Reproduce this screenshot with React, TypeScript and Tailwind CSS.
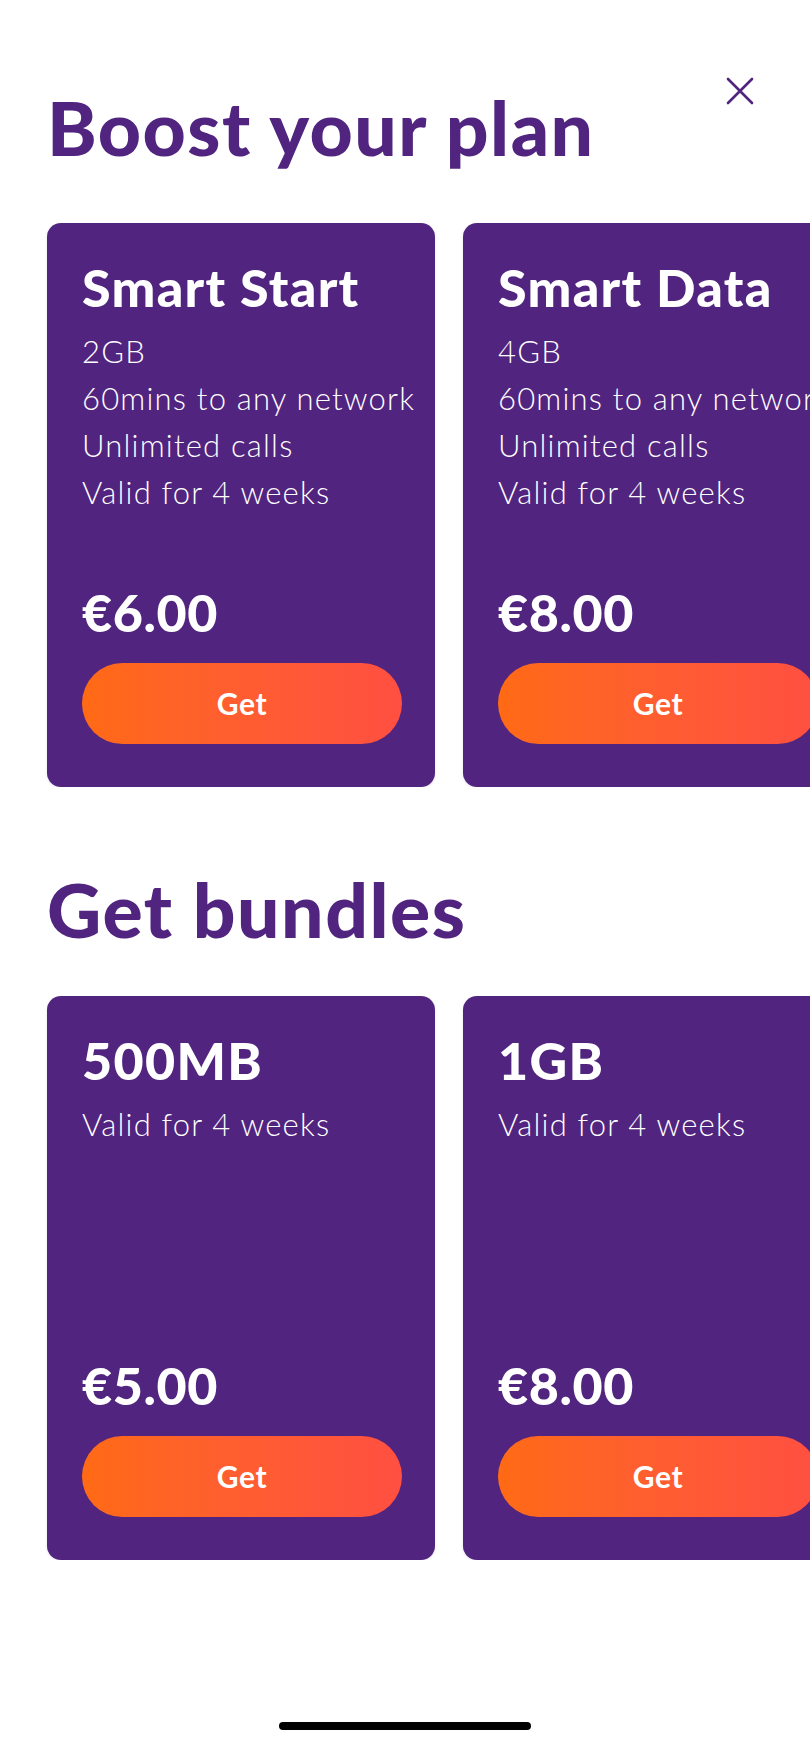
import React from 'react';

type Offer = {
    id: string;
    name: string;
    lines: string[];
    price: string;
};

const plans: Offer[] = [
    { id: 'smart-start', name: 'Smart Start', lines: ['2GB', '60mins to any network', 'Unlimited calls', 'Valid for 4 weeks'], price: '€6.00' },
    { id: 'smart-data', name: 'Smart Data', lines: ['4GB', '60mins to any network', 'Unlimited calls', 'Valid for 4 weeks'], price: '€8.00' },
];

const bundles: Offer[] = [
    { id: '500mb', name: '500MB', lines: ['Valid for 4 weeks'], price: '€5.00' },
    { id: '1gb', name: '1GB', lines: ['Valid for 4 weeks'], price: '€8.00' },
];

const heading = "font-['Lato',sans-serif] font-black";

const OfferCard: React.FC<{ offer: Offer }> = ({ offer }) => (
    <div className="w-[388px] h-[564px] shrink-0 bg-[#51247f] rounded-[14px] shadow-[0_1px_3px_rgba(81,36,127,0.12)] flex flex-col pt-[34px] pb-[43px] px-[35px] text-white">
        <h3 className={`${heading} text-[52px] leading-[60px] tracking-[1.3px] whitespace-nowrap`}>{offer.name}</h3>
        <div className="mt-[11px] font-['Lato',sans-serif] font-light text-[31px] leading-[47px] tracking-[1.2px] whitespace-nowrap">
            {offer.lines.map(line => (
                <p key={line}>{line}</p>
            ))}
        </div>
        <p className={`${heading} mt-auto text-[52px] leading-[60px] tracking-[0.6px]`}>{offer.price}</p>
        <button className="mt-[21px] h-[81px] w-[320px] rounded-full bg-gradient-to-r from-[#ff6a14] to-[#ff4f41] font-['Lato',sans-serif] font-bold text-[30px] tracking-[0.6px] text-white">
            Get
        </button>
    </div>
);

const Section: React.FC<{ title: string; offers: Offer[]; className: string; gap: string }> = ({ title, offers, className, gap }) => (
    <section className={className}>
        <h2 className={`${heading} px-[47px] text-[75px] leading-[88px] tracking-[1.5px] text-[#51247f]`}>{title}</h2>
        <div className={`${gap} flex gap-[28px] px-[47px] overflow-hidden`}>
            {offers.map(offer => (
                <OfferCard key={offer.id} offer={offer} />
            ))}
        </div>
    </section>
);

const App: React.FC = () => {
    return (
        <div className="relative w-[810px] min-h-[1755px] bg-white overflow-hidden flex flex-col">
            <button aria-label="Close" className="absolute top-[77px] right-[56px] w-[28px] h-[28px] text-[#51247f]">
                <svg viewBox="0 0 28 28" className="w-full h-full" fill="none" stroke="currentColor" strokeWidth="2.6" strokeLinecap="round">
                    <path d="M2 2 L26 26 M26 2 L2 26" />
                </svg>
            </button>

            <Section title="Boost your plan" offers={plans} className="pt-[83px]" gap="mt-[52px]" />
            <Section title="Get bundles" offers={bundles} className="mt-[78px]" gap="mt-[43px]" />

            <div className="mt-auto pb-[25px] flex justify-center">
                <div className="w-[252px] h-[8px] rounded-full bg-black" />
            </div>
        </div>
    );
};

export default App;
